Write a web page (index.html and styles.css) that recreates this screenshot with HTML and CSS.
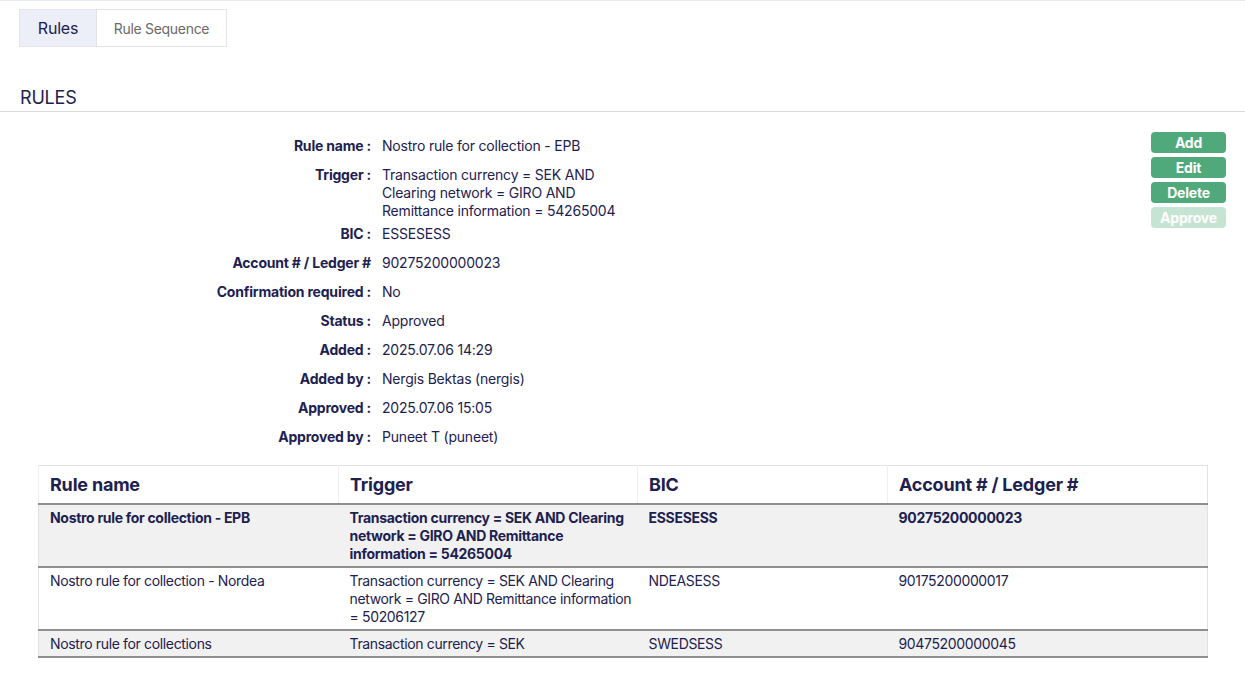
FILE: index.html
```html
<!DOCTYPE html>
<html>
<head>
<meta charset="utf-8">
<link rel="stylesheet" href="styles.css">
</head>
<body>
<div class="page">
  <div class="tabs">
    <div class="tab active">Rules</div>
    <div class="tab">Rule Sequence</div>
  </div>
  <h2 class="section-title">RULES</h2>
  <div class="detail">
    <div class="fields">
      <div class="row"><div class="label">Rule name :</div><div class="value">Nostro rule for collection - EPB</div></div>
      <div class="row"><div class="label">Trigger :</div><div class="value">Transaction currency = SEK AND<br>Clearing network = GIRO AND<br>Remittance information = 54265004</div></div>
      <div class="row"><div class="label">BIC :</div><div class="value">ESSESESS</div></div>
      <div class="row"><div class="label">Account # / Ledger #</div><div class="value">90275200000023</div></div>
      <div class="row"><div class="label">Confirmation required :</div><div class="value">No</div></div>
      <div class="row"><div class="label">Status :</div><div class="value">Approved</div></div>
      <div class="row"><div class="label">Added :</div><div class="value">2025.07.06 14:29</div></div>
      <div class="row"><div class="label">Added by :</div><div class="value">Nergis Bektas (nergis)</div></div>
      <div class="row"><div class="label">Approved :</div><div class="value">2025.07.06 15:05</div></div>
      <div class="row"><div class="label">Approved by :</div><div class="value">Puneet T (puneet)</div></div>
    </div>
    <div class="actions">
      <button class="btn">Add</button>
      <button class="btn">Edit</button>
      <button class="btn">Delete</button>
      <button class="btn disabled">Approve</button>
    </div>
  </div>
  <table class="grid">
    <thead>
      <tr><th class="c1">Rule name</th><th class="c2">Trigger</th><th class="c3">BIC</th><th class="c4">Account # / Ledger #</th></tr>
    </thead>
    <tbody>
      <tr class="selected shaded"><td>Nostro rule for collection - EPB</td><td>Transaction currency = SEK AND Clearing network = GIRO AND Remittance information =&nbsp;54265004</td><td>ESSESESS</td><td>90275200000023</td></tr>
      <tr><td>Nostro rule for collection - Nordea</td><td>Transaction currency = SEK AND Clearing network = GIRO AND Remittance information =&nbsp;50206127</td><td>NDEASESS</td><td>90175200000017</td></tr>
      <tr class="shaded"><td>Nostro rule for collections</td><td>Transaction currency = SEK</td><td>SWEDSESS</td><td>90475200000045</td></tr>
    </tbody>
  </table>
</div>
</body>
</html>
```
FILE: styles.css
```css
* { box-sizing: border-box; }
html, body { margin: 0; padding: 0; background: #fff; }
body {
  font-family: Inter, "Noto Sans", sans-serif;
  color: #1d2150;
  font-size: 14px;
  letter-spacing: -0.2px;
}
.page {
  border-top: 1px solid #e9eaf3;
  height: 676px;
  padding-top: 8px;
}
.tabs {
  display: flex;
  margin-left: 19px;
  height: 38px;
}
.tab {
  display: flex;
  align-items: center;
  justify-content: center;
  border: 1px solid #e3e3e8;
  color: #6a6a6a;
  font-size: 14px;
  letter-spacing: -0.3px;
  width: 131px;
}
.tab.active {
  width: 77px;
  background: #eceef8;
  color: #1d2150;
  font-size: 16px;
  letter-spacing: -0.2px;
  border-right: none;
}
.section-title {
  margin: 40px 0 0;
  padding: 0 0 2px 20px;
  font-size: 18px;
  font-weight: 400;
  line-height: 22px;
  border-bottom: 1px solid #dcdcdc;
  color: #1d2150;
}
.detail {
  display: flex;
  justify-content: space-between;
  padding: 20px 19px 0 20px;
}
.fields {
  display: flex;
  flex-direction: column;
  padding-top: 4px;
}
.row {
  display: flex;
  min-height: 29px;
  padding: 1px 0 4px;
  line-height: 18px;
}
.label {
  width: 351px;
  text-align: right;
  font-weight: 700;
}
.value {
  margin-left: 11px;
}
.actions {
  display: flex;
  flex-direction: column;
  gap: 4px;
}
.btn {
  width: 75px;
  height: 21px;
  border: none;
  border-radius: 4px;
  background: #4fa97a;
  color: #fff;
  font-family: Inter, "Noto Sans", sans-serif;
  font-weight: 700;
  font-size: 14px;
  line-height: 21px;
  padding: 0;
  letter-spacing: -0.2px;
}
.btn.disabled { background: #c6e4d3; }
.grid {
  margin: 9px 0 0 38px;
  width: 1170px;
  border-collapse: collapse;
  table-layout: fixed;
  border: 1px solid #e2e2e2;
  border-bottom: 2px solid #8f8f8f;
}
.grid th {
  text-align: left;
  font-size: 18px;
  font-weight: 700;
  height: 38px;
  padding: 0 11px;
  border-bottom: 2px solid #8f8f8f;
  border-left: 1px solid #efefef;
}
.grid th.c1 { width: 300px; }
.grid th.c2 { width: 299px; }
.grid th.c3 { width: 250px; }
.grid td {
  vertical-align: top;
  padding: 4px 1px 3px 11px;
  line-height: 18px;
  letter-spacing: -0.35px;
  border-top: 2px solid #8f8f8f;
}
.grid tbody tr:first-child td { border-top: none; }
.grid tr.shaded td { background: #f1f1f1; }
.grid tr.selected td { font-weight: 700; letter-spacing: -0.3px; }
```
